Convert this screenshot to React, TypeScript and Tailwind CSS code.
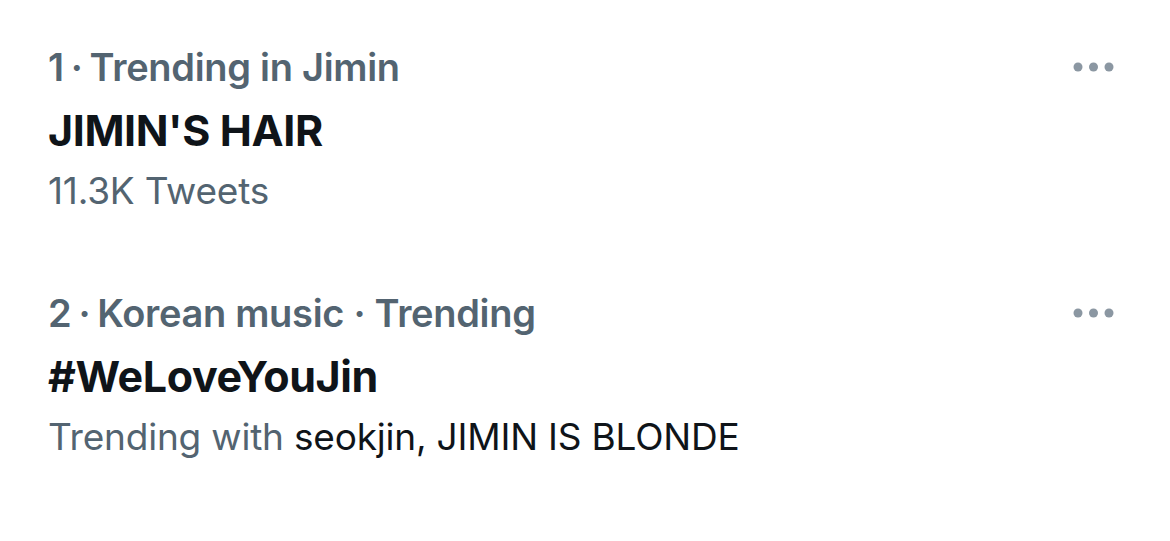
type Trend = {
    rank: number;
    context: string;
    title: string;
    sub: React.ReactNode;
};

const trends: Trend[] = [
    {
        rank: 1,
        context: 'Trending in Jimin',
        title: "JIMIN'S HAIR",
        sub: <span>11.3K Tweets</span>,
    },
    {
        rank: 2,
        context: 'Korean music · Trending',
        title: '#WeLoveYouJin',
        sub: (
            <span>
                Trending with <span className="text-[#0f1419]">seokjin, JIMIN IS BLONDE</span>
            </span>
        ),
    },
];

function MoreDots() {
    return (
        <svg width="42" height="10" viewBox="0 0 42 10" className="mt-[17px] shrink-0" fill="#8b97a2">
            <circle cx="5" cy="5" r="4.5" />
            <circle cx="20.5" cy="5" r="4.5" />
            <circle cx="36" cy="5" r="4.5" />
        </svg>
    );
}

function TrendRow({ trend }: { trend: Trend }) {
    return (
        <div className="flex items-start justify-between pl-12 pr-[55px] pt-[45px] pb-[33px]">
            <div className="flex flex-col">
                <div className="text-[38px] leading-[44px] font-semibold text-[#536471] tracking-[-0.3px]">
                    {trend.rank}
                    <span className="mx-[7px]">·</span>
                    {trend.context}
                </div>
                <div className="text-[43px] leading-[52px] font-bold text-[#0f1419] mt-[15px] tracking-[-0.4px]">
                    {trend.title}
                </div>
                <div className="text-[37px] leading-[44px] text-[#536471] mt-[13px] tracking-[-0.2px]">
                    {trend.sub}
                </div>
            </div>
            <MoreDots />
        </div>
    );
}

export default function App() {
    return (
        <div className="w-[1170px] h-[541px] bg-white overflow-hidden font-['Inter',sans-serif]">
            {trends.map((t) => (
                <TrendRow key={t.rank} trend={t} />
            ))}
        </div>
    );
}
